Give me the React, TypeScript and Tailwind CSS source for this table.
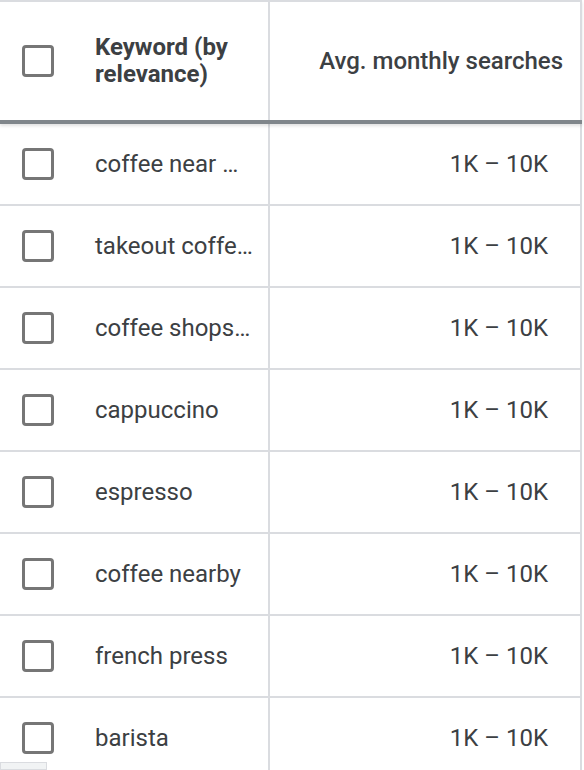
import { useState } from 'react'

interface KeywordRow {
  id: number
  keyword: string
  searches: string
}

// labels are already shortened the way the narrow column shows them
const rows: KeywordRow[] = [
  { id: 1, keyword: 'coffee near …', searches: '1K – 10K' },
  { id: 2, keyword: 'takeout coffe…', searches: '1K – 10K' },
  { id: 3, keyword: 'coffee shops…', searches: '1K – 10K' },
  { id: 4, keyword: 'cappuccino', searches: '1K – 10K' },
  { id: 5, keyword: 'espresso', searches: '1K – 10K' },
  { id: 6, keyword: 'coffee nearby', searches: '1K – 10K' },
  { id: 7, keyword: 'french press', searches: '1K – 10K' },
  { id: 8, keyword: 'barista', searches: '1K – 10K' },
]

function Checkbox({ checked, onChange }: { checked: boolean; onChange: () => void }) {
  return (
    <button
      onClick={onChange}
      className={`w-[32px] h-[32px] shrink-0 rounded-[4px] border-[3px] ${
        checked ? 'border-[#1a73e8] bg-[#1a73e8]' : 'border-[#767676] bg-white'
      }`}
    />
  )
}

export default function App() {
  const [selected, setSelected] = useState<number[]>([])

  const toggle = (id: number) => {
    setSelected(prev => (prev.includes(id) ? prev.filter(x => x !== id) : [...prev, id]))
  }

  const allChecked = selected.length === rows.length

  return (
    <div
      className="relative w-[584px] h-[770px] overflow-hidden bg-white text-[#3c4043]"
      style={{ fontFamily: 'Roboto, "Liberation Sans", sans-serif' }}
    >
      <div className="w-[582px]">
        {/* Header */}
        <div className="relative z-10 flex h-[124px] border-t-2 border-b-[4px] border-t-[#dadce0] border-b-[#80868b] shadow-[0_2px_3px_rgba(0,0,0,0.12)]">
          <div className="flex items-center w-[270px] pl-[22px] border-r-2 border-[#dadce0]">
            <Checkbox
              checked={allChecked}
              onChange={() => setSelected(allChecked ? [] : rows.map(r => r.id))}
            />
            <div className="ml-[41px] text-[24px] leading-[27px] font-bold">
              Keyword (by
              <br />
              relevance)
            </div>
          </div>
          <div className="flex items-center justify-end flex-1 pr-[17px] border-r-2 border-[#dadce0]">
            <span className="text-[24px] font-medium">Avg. monthly searches</span>
          </div>
        </div>

        {/* Rows */}
        {rows.map(row => (
          <div key={row.id} className="flex h-[82px] border-b-2 border-[#dadce0]">
            <div className="flex items-center w-[270px] pl-[22px] border-r-2 border-[#dadce0]">
              <Checkbox checked={selected.includes(row.id)} onChange={() => toggle(row.id)} />
              <span className="ml-[41px] whitespace-nowrap text-[24px]">{row.keyword}</span>
            </div>
            <div className="flex items-center justify-end flex-1 pr-[32px] border-r-2 border-[#dadce0]">
              <span className="text-[24px]">{row.searches}</span>
            </div>
          </div>
        ))}
      </div>

      {/* horizontal scroll thumb */}
      <div className="absolute left-0 bottom-0 w-[47px] h-[8px] bg-[#f1f3f4] border border-[#dadce0]" />
    </div>
  )
}
